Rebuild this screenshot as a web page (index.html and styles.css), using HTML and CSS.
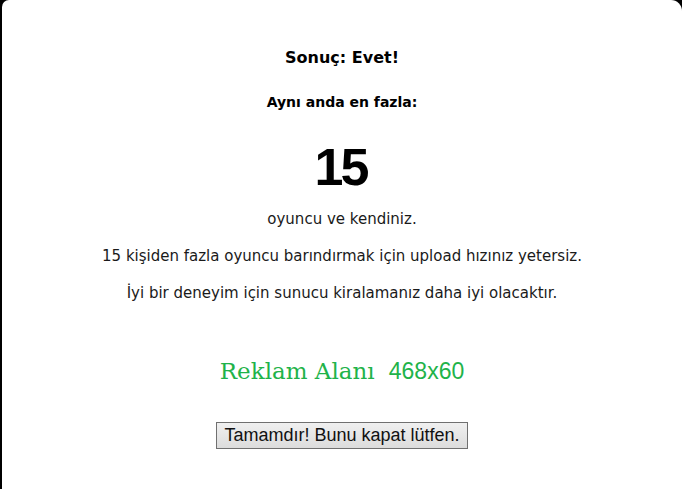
FILE: index.html
```html
<!DOCTYPE html>
<html lang="tr">
<head>
<meta charset="utf-8">
<title>Sonuç</title>
<link rel="stylesheet" href="styles.css">
</head>
<body>
<div class="card">
  <p class="title">Sonuç: Evet!</p>
  <p class="subtitle">Aynı anda en fazla:</p>
  <p class="count">15</p>
  <p class="line first">oyuncu ve kendiniz.</p>
  <p class="line">15 kişiden fazla oyuncu barındırmak için upload hızınız yetersiz.</p>
  <p class="line">İyi bir deneyim için sunucu kiralamanız daha iyi olacaktır.</p>
  <div class="ad"><span class="ad-label">Reklam Alanı</span> <span class="ad-size">468x60</span></div>
  <div class="actions"><button class="btn" type="button">Tamamdır! Bunu kapat lütfen.</button></div>
</div>
</body>
</html>
```
FILE: styles.css
```css
html, body {
  margin: 0;
  padding: 0;
  background: #000;
  height: 100%;
}
.card {
  box-sizing: border-box;
  margin-left: 2px;
  min-height: 489px;
  background: #fff;
  border-radius: 7px 11px 0 0;
  padding-top: 47px;
  text-align: center;
  font-family: "DejaVu Sans", sans-serif;
  color: #111;
}
.card p {
  margin: 0;
}
.title {
  font-size: 16px;
  font-weight: bold;
  line-height: 22px;
  color: #000;
}
.subtitle {
  margin-top: 23px !important;
  font-size: 14px;
  font-weight: bold;
  line-height: 20px;
  color: #000;
}
.count {
  margin-top: 27px !important;
  font-family: "Liberation Sans", Arial, sans-serif;
  font-size: 52px;
  font-weight: bold;
  line-height: 56px;
  letter-spacing: -3px;
  text-indent: -3px;
  color: #000;
}
.line {
  font-size: 15px;
  line-height: 20px;
  margin-top: 17px !important;
  color: #1a1a1a;
}
.line.first {
  margin-top: 14px !important;
}
.ad {
  margin-top: 53px;
  line-height: 30px;
  color: #1fb34a;
}
.ad-label {
  font-family: "DejaVu Serif", serif;
  font-size: 23px;
}
.ad-size {
  font-family: "Liberation Sans", Arial, sans-serif;
  font-size: 23px;
  margin-left: 9px;
}
.actions {
  margin-top: 33px;
}
.btn {
  font-family: "Liberation Sans", Arial, sans-serif;
  font-size: 18px;
  color: #111;
  height: 27px;
  padding: 0 7px;
  border: 1px solid #707070;
  border-radius: 0;
  background: linear-gradient(#f0f0f0, #dcdcdc);
}
```
